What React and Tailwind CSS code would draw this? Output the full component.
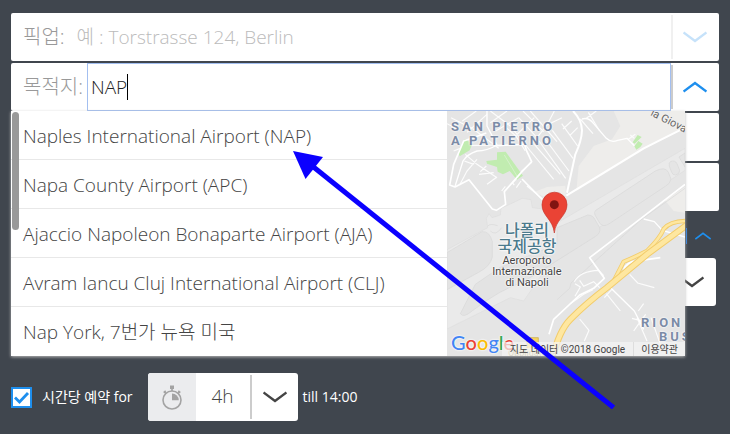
import { useState } from "react";

const places = [
  "Naples International Airport (NAP)",
  "Napa County Airport (APC)",
  "Ajaccio Napoleon Bonaparte Airport (AJA)",
  "Avram Iancu Cluj International Airport (CLJ)",
  "Nap York, 7번가 뉴욕 미국",
];

function Chevron({ up, className }) {
  return (
    <svg viewBox="0 0 24 12" fill="none" stroke="currentColor" strokeWidth="2.4" className={className}>
      <path d={up ? "M.5 10.5 12 2l11.5 8.5" : "M.5 1.5 12 10l11.5-8.5"} />
    </svg>
  );
}

function Stopwatch() {
  return (
    <svg viewBox="0 0 20 25" className="h-[25px] w-5" fill="none" stroke="#a3a3a3">
      <circle cx="10" cy="15" r="9" strokeWidth="1.6" />
      <path d="M10 8.500v6.800h6.800A6.800 6.800 0 0 0 10 8.500z" fill="#a3a3a3" stroke="none" />
      <path d="M8 .5h4v3.400H8z" fill="#a3a3a3" stroke="none" />
      <path d="M10 3v3M3.600 8 2.600 6.600M1.700 7.600l2-1.800M16.400 8l1-1.400M18.300 7.600l-2-1.800" strokeWidth="1.6" />
    </svg>
  );
}

function MapDrawing() {
  return (
    <svg viewBox="0 0 714 735" className="block h-full w-full" preserveAspectRatio="xMinYMin slice" fill="none">
      <rect width="714" height="735" fill="#e5e5e5" />
      <path d="M500 0 520 45 495 85 440 105 395 165 388 240 600 110 714 50V0z" fill="#eeedeb" />
      <path d="M262 243 300 228 355 224 357 255 300 262z" fill="#eeedeb" />
      <path d="M714 228 654 268 680 300 714 305z" fill="#eeedeb" />

      {/* runways and aprons */}
      <g stroke="#d8d8d8" strokeWidth="2">
        <path d="M0 416 122 350 118 322 126 308 135 320 160 312 162 292 205 272 225 262 252 266 256 290 288 294 340 330 714 112V178L420 374 330 425 230 570 190 560 0 654z" fill="#eaeaea" stroke="#dedede" />
        <path d="M0 425 105 362Q128 360 136 392V438Q130 466 95 484L0 536z" fill="#e3e3e3" />
        <path d="M330 350 422 312Q438 312 444 326L458 350Q462 366 446 376L230 512Q160 535 75 600Q50 622 40 608L85 520 158 470 330 400z" fill="#e3e3e3" />
        <path d="M446 298 625 180Q655 165 664 184L672 204Q670 218 655 226L490 336Q468 352 458 336L444 312Q440 304 446 298z" fill="#e5e5e5" />
        <path d="M670 152Q684 146 690 158L698 178Q698 190 686 192 676 192 674 184L667 166Q665 156 670 152z" fill="#e5e5e5" />
        <path d="M696 138 714 126V168z" fill="#e5e5e5" />
        <path d="M122 346Q128 336 152 344M130 360Q146 376 164 350M330 566 368 532 372 516 580 328 714 232" />
      </g>

      {/* minor streets */}
      <g stroke="#fcfcfc" strokeWidth="3.500">
        <path d="M12 20 80 55 155 112M46 30 88 0M60 64 120 10M0 38 30 54M20 120 60 104 150 102M55 130 90 160 150 200M90 145 60 180 38 222M80 160 52 150M96 190 140 185M120 220 150 198M118 165 100 182M130 0 190 45 250 120M130 35 180 0M146 60 215 20M180 52 206 74 262 20M206 74 235 120M215 20 270 80M228 0 290 62M250 0 330 92M270 80 300 42 322 0M250 120 320 205M262 100 340 190M276 90 356 202M290 78 366 180M316 58 378 142M344 38 392 105M300 42 345 20M348 54 374 30M368 74 392 50M400 24 424 52 438 68M424 4 458 60M418 22 448 0" />
        <path d="M212 200 196 216 202 222M222 210 208 230M240 225 300 275M175 226 164 240M222 182 254 154M544 85 565 70M550 72 562 82" />
        <path d="M382 512Q400 480 455 478L470 494M398 508 410 526 440 512 458 530M384 518 400 528 384 556M370 578 410 550 438 536M398 624 426 658 412 690M478 548 520 600M494 536 472 560M548 490 572 516 622 530M574 600 590 578M596 610 574 640 560 660M555 622 585 630M600 690 570 620M612 620 640 700" />
      </g>

      {/* parks */}
      <g fill="#c1ecb0">
        <path d="M54 84 76 98 68 118 38 136 33 124z" />
        <path d="M150 124 176 122 228 194 210 206 188 180 168 190 152 182 150 168 120 158 118 150 150 146z" />
        <path d="M572 72 584 78 563 98 557 94zM574 90 587 98 580 108 568 116 562 106z" />
      </g>
      <path d="M172 132 214 202" stroke="#e0f3d8" strokeWidth="2" />

      {/* streets */}
      <g stroke="#ffffff" strokeWidth="5" strokeLinejoin="round">
        <path d="M120 0V45L150 102Q120 120 90 120 60 130 48 150L24 226" strokeWidth="4" />
        <path d="M150 104 232 100 240 122 254 152 225 182 172 242 176 280 148 298 136 294 66 206 24 228 8 222 20 160 50 90 118 66" />
        <path d="M225 204 290 270" />
        <path d="M378 0Q404 26 405 58 404 90 385 130L360 245" strokeWidth="6" />
        <path d="M358 254 590 112 714 50" strokeWidth="6" />
        <path d="M405 24Q425 18 440 38L478 82Q492 96 512 88L540 82 562 104" strokeWidth="4" />
        <path d="M714 220 578 325 428 440 472 502 440 532 398 552 320 625 306 670" />
        <path d="M590 324 622 332 646 358 714 378M480 520 562 600 590 655" strokeWidth="4" />
        <path d="M528 490Q530 460 556 452L640 440" />
      </g>

      {/* motorway */}
      <g strokeLinecap="round">
        <path d="M720 330Q670 330 650 354 640 380 600 420 560 440 530 452L496 518" stroke="#f2cc6b" strokeWidth="13" />
        <path d="M720 330Q670 330 650 354 640 380 600 420 560 440 530 452L496 518" stroke="#fee7a0" strokeWidth="8" />
        <path d="M720 342 600 430 480 530Q420 575 370 625 335 660 316 745" stroke="#f2cc6b" strokeWidth="20" />
        <path d="M720 342 600 430 480 530Q420 575 370 625 335 660 316 745" stroke="#fee7a0" strokeWidth="14" />
      </g>
      <path d="M240 680h34v34h-34z" fill="#f5d364" stroke="#c9a93c" strokeWidth="2" />

      {/* pin */}
      <path d="M322 366C318 325 285 315 285 281a37.500 37.500 0 0 1 75 0C360 315 326 325 322 366z" fill="#ea4335" stroke="#c5372c" strokeWidth="2" />
      <circle cx="322" cy="281" r="13.500" fill="#811411" />
    </svg>
  );
}

function MapPreview() {
  return (
    <div className="relative w-[238px] shrink-0 overflow-hidden bg-[#e5e5e5] font-[Roboto,'Noto_Sans_CJK_KR',sans-serif]">
      <div className="absolute inset-0">
        <MapDrawing />
      </div>
      <p className="absolute top-[9px] left-1 text-[13px] leading-[14px] font-bold tracking-[3px] whitespace-nowrap text-[#7b8ba6] [text-shadow:0_0_2px_#fff,0_0_2px_#fff]">
        SAN PIETRO
        <br />A PATIERNO
      </p>
      <p className="absolute -top-1 left-[207px] origin-top-left rotate-[27deg] text-[11px] leading-[12px] whitespace-nowrap text-[#666] [text-shadow:0_0_2px_#fff]">
        ia Giova
      </p>
      <div className="absolute top-28 left-[40px] w-20 text-center [text-shadow:0_0_2px_#fff,0_0_2px_#fff,0_0_2px_#fff]">
        <p className="text-[16px] leading-4 font-medium text-[#4b7a8c]">
          나폴리
          <br />
          국제공항
        </p>
        <p className="text-[11px] leading-[11px] text-[#444]">
          Aeroporto
          <br />
          Internazionale
          <br />
          di Napoli
        </p>
      </div>
      <p className="absolute top-[205px] left-[194px] text-[13px] leading-[14px] font-bold tracking-[3px] whitespace-nowrap text-[#7b8ba6] [text-shadow:0_0_2px_#fff,0_0_2px_#fff]">
        RION
        <br />
        <span className="pl-[18px]">BUS</span>
      </p>
      <p className="absolute bottom-[-2px] left-[61px] bg-[#f5eccb] text-[9px] leading-[10px] text-[#a39a72]">Obbligatoria</p>
      <p className="absolute bottom-[2px] left-1 flex text-[20px] leading-6 font-[Lato,sans-serif] font-medium [text-shadow:0_0_2px_#fff,0_0_2px_#fff]">
        <span className="text-[#4285f4]">G</span>
        <span className="text-[#ea4335]">o</span>
        <span className="text-[#fbbc05]">o</span>
        <span className="text-[#4285f4]">g</span>
        <span className="text-[#34a853]">l</span>
        <span className="text-[#ea4335]">e</span>
      </p>
      <div className="absolute right-0 bottom-0 flex h-[14px] items-center bg-[#f5f5f5]/70 text-[10px] whitespace-nowrap text-[#444]">
        <span className="px-2">지도 데이터 ©2018 Google</span>
        <a href="#terms" className="border-l border-[#ddd] px-[7px]">
          이용약관
        </a>
      </div>
    </div>
  );
}

function Suggestions() {
  return (
    <div className="absolute top-12 right-[34px] left-0 z-10 flex bg-white shadow-[0_1px_3px_#bbb]">
      <div className="relative min-w-0 flex-1">
        <ul>
          {places.map((place) => (
            <li key={place} className="border-b border-[#e8e8e8] last:border-transparent">
              <button type="button" className="block h-12 w-full truncate px-3 pt-[2px] text-left text-[19px] font-light text-[#444]">
                {place}
              </button>
            </li>
          ))}
        </ul>
        <div className="absolute top-px left-px h-[118px] w-[7px] rounded-full bg-[#999]" />
      </div>
      <MapPreview />
    </div>
  );
}

function App() {
  const [pickup, setPickup] = useState("");
  const [destination, setDestination] = useState("NAP");
  const [hourly, setHourly] = useState(true);

  return (
    <div className="relative min-h-screen overflow-hidden bg-[#40464e] pt-[13px] pr-[11px] pl-[11px] font-['Open_Sans','Noto_Sans_CJK_KR',sans-serif]">
      <form className="flex flex-col gap-[2px]">
        <div className="flex h-12 items-center rounded-[2px] bg-white">
          <label htmlFor="pickup" className="pl-3 text-xl font-light text-[#999]">
            픽업:
          </label>
          <input
            id="pickup"
            type="text"
            placeholder="예 : Torstrasse 124, Berlin"
            value={pickup}
            onChange={(e) => setPickup(e.target.value)}
            className="h-full min-w-0 flex-1 pl-3 text-[19px] font-light outline-none placeholder:text-[#bbb]"
          />
          <button type="button" aria-label="pickup" className="flex h-11 w-12 items-center justify-center border-l-2 border-[#f0f0f0] pr-[3px] text-[#c6e2fa]">
            <Chevron className="h-3 w-6" />
          </button>
        </div>

        <div className="relative flex h-12 items-center rounded-[2px] bg-white">
          <label htmlFor="destination" className="pl-3 text-xl font-light text-[#999]">
            목적지:
          </label>
          <div className="ml-1 flex h-full min-w-0 flex-1 items-center border border-[#a3bff0]">
            <input
              id="destination"
              type="text"
              value={destination}
              onChange={(e) => setDestination(e.target.value)}
              className="field-sizing-content border-r border-black pl-[3px] text-[19px] leading-[26px] font-light text-[#222] outline-none"
            />
          </div>
          <button type="button" aria-label="destination" className="flex h-11 w-12 items-center justify-center border-l-2 border-[#ccc] pr-[3px] text-[#1e8fee]">
            <Chevron up className="h-3 w-6" />
          </button>
          <Suggestions />
        </div>

        <div className="h-12 rounded-[2px] bg-white" />
        <div className="h-12 rounded-[2px] bg-white" />

        <div className="flex h-[43px] items-center justify-end pt-[2px] pr-2 text-[#1e8fee]">
          <a href="#options" className="flex items-center gap-2">
            <span className="h-4 w-px bg-[#2a7de0]" />
            <Chevron up className="h-2 w-4" />
          </a>
        </div>

        <div className="mr-[3px] flex h-12 items-center justify-end rounded-[3px] bg-white pr-3 text-[#444]">
          <Chevron className="h-3 w-6" />
        </div>

        <div className="mt-[65px] flex h-12 items-center text-sm text-white">
          <label className="flex items-center gap-[10px]">
            <span className="relative flex">
              <input
                type="checkbox"
                checked={hourly}
                onChange={() => setHourly(!hourly)}
                className="size-[21px] appearance-none border-2 border-[#1e8fee] bg-white"
              />
              {hourly && (
                <svg viewBox="0 0 21 21" className="pointer-events-none absolute inset-0" fill="none" stroke="#1e8fee" strokeWidth="2.800">
                  <path d="m4 10.500 4.500 4.500 8.500-9" />
                </svg>
              )}
            </span>
            시간당 예약 for
          </label>
          <div className="mr-[5px] ml-[15px] flex h-12 items-center overflow-hidden rounded-[3px] bg-white">
            <span className="flex h-full w-12 items-center justify-center bg-[#ebecee]">
              <Stopwatch />
            </span>
            <span className="w-[54px] text-center text-[19px] font-light text-[#444]">4h</span>
            <button type="button" aria-label="hours" className="flex h-11 w-12 items-center justify-center border-l-2 border-[#ccc] text-[#444]">
              <Chevron className="h-3 w-6" />
            </button>
          </div>
          till 14:00
        </div>
      </form>

      <svg viewBox="0 0 322 258" className="pointer-events-none absolute top-[151px] left-[293px] z-20 h-[258px] w-[322px]">
        <path d="M0 0 30 6 12.500 28z" fill="#0b00ff" />
        <path d="M18 14 320.500 256.500" stroke="#0b00ff" strokeWidth="5" />
      </svg>
    </div>
  );
}

export default App;
